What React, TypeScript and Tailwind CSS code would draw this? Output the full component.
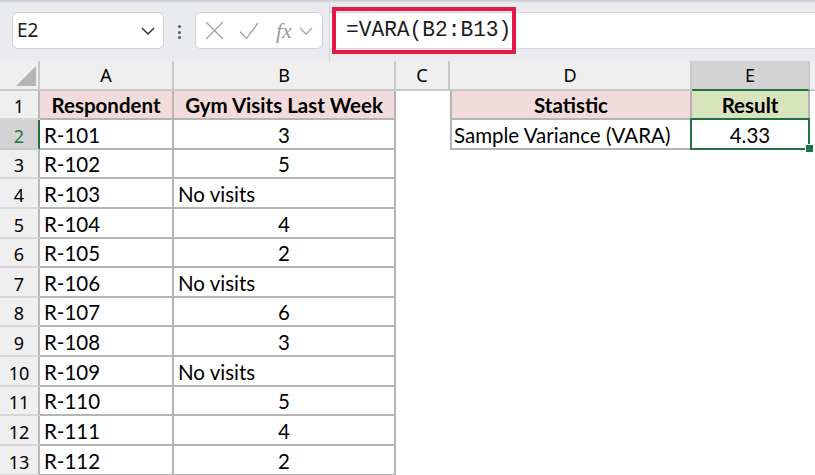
import React from "react";

const LINE = "border-[#b4b4b4]";
const CELL = "font-['Lato',sans-serif] text-[20.5px] text-black leading-none";

type Row = { n: number; h: string; a: string; b: string; d?: string; e?: string };

const ROWS: Row[] = [
  { n: 2, h: "h-[30px]", a: "R-101", b: "3", d: "Sample Variance (VARA)", e: "4.33" },
  { n: 3, h: "h-[29px]", a: "R-102", b: "5" },
  { n: 4, h: "h-[30px]", a: "R-103", b: "No visits" },
  { n: 5, h: "h-[30px]", a: "R-104", b: "4" },
  { n: 6, h: "h-[29px]", a: "R-105", b: "2" },
  { n: 7, h: "h-[30px]", a: "R-106", b: "No visits" },
  { n: 8, h: "h-[29px]", a: "R-107", b: "6" },
  { n: 9, h: "h-[30px]", a: "R-108", b: "3" },
  { n: 10, h: "h-[30px]", a: "R-109", b: "No visits" },
  { n: 11, h: "h-[29px]", a: "R-110", b: "5" },
  { n: 12, h: "h-[30px]", a: "R-111", b: "4" },
  { n: 13, h: "h-[30px]", a: "R-112", b: "2" },
];

function Toolbar() {
  return (
    <div className="relative h-[61px] bg-[#e9ebee] flex items-start">
      <div className="absolute inset-x-0 top-0 h-[3px] bg-gradient-to-b from-[#c3c5c8] to-[#e9ebee]" />
      {/* name box */}
      <div className="mt-[12px] ml-[12px] w-[152px] h-[37px] rounded-[6px] border border-[#cdd0d4] bg-white flex items-center justify-between pl-[4px] pr-[8px]">
        <span className="font-['Noto_Sans',sans-serif] text-[19px] text-[#1b1b1b]">E2</span>
        <svg width="14" height="8" viewBox="0 0 14 8" fill="none">
          <path d="M1 1l6 6 6-6" stroke="#333" strokeWidth="1.5" />
        </svg>
      </div>
      <div className="mt-[25px] w-[31px] flex flex-col items-center gap-[2.5px]">
        <span className="w-[3px] h-[3px] rounded-full bg-[#555]" />
        <span className="w-[3px] h-[3px] rounded-full bg-[#555]" />
        <span className="w-[3px] h-[3px] rounded-full bg-[#555]" />
      </div>
      {/* fx box */}
      <div className="mt-[12px] w-[128px] h-[37px] rounded-[6px] border border-[#cdd0d4] bg-white flex items-center pl-[9px]">
        <svg width="19" height="19" viewBox="0 0 19 19" fill="none">
          <path d="M1 1l17 17M18 1L1 18" stroke="#a5a5a5" strokeWidth="1.4" />
        </svg>
        <svg className="ml-[15px]" width="20" height="18" viewBox="0 0 20 18" fill="none">
          <path d="M1 9.5l6.5 7L19 1" stroke="#a5a5a5" strokeWidth="1.4" />
        </svg>
        <span className="ml-[17px] font-['Liberation_Serif',serif] italic text-[22px] text-[#9a9a9a] leading-none">
          fx
        </span>
        <svg className="ml-[7px]" width="14" height="8" viewBox="0 0 14 8" fill="none">
          <path d="M1 1l6 6 6-6" stroke="#a5a5a5" strokeWidth="1.4" />
        </svg>
      </div>
      <div className="ml-[6px] w-px self-stretch bg-[#d3d6da]" />
      {/* formula box */}
      <div className="relative mt-[12px] flex-1 h-[37px] bg-white border-y border-[#d6d8db] flex items-center pl-[16px]">
        <span className="font-['Liberation_Mono',monospace] text-[21.2px] text-[#1b1b1b] leading-none">
          =VARA(B2:B13)
        </span>
        <div className="absolute left-[2px] top-[-6px] w-[184px] h-[47px] border-[4px] border-[#e3194b]" />
      </div>
    </div>
  );
}

function ColHeader() {
  const hd = "h-[30px] shrink-0 border-r-2 border-b-2 border-[#c9c9c9] flex items-center justify-center font-['Noto_Sans',sans-serif] text-[18px] text-black";
  return (
    <div className="flex bg-[#efefef]">
      <div className={`${hd} w-[40px] relative`}>
        <svg className="absolute left-[16px] top-[5px]" width="20" height="20" viewBox="0 0 20 20">
          <path d="M0 20L20 0V20Z" fill="#b5b5b5" />
        </svg>
      </div>
      <div className={`${hd} w-[134px]`}>A</div>
      <div className={`${hd} w-[222px]`}>B</div>
      <div className={`${hd} w-[54px]`}>C</div>
      <div className={`${hd} w-[242px]`}>D</div>
      <div className={`${hd} w-[118px] bg-[#d3d3d3] text-[#217346] border-b-[#217346]`}>E</div>
      <div className="flex-1 h-[30px] border-b-2 border-[#c9c9c9]" />
    </div>
  );
}

function RowHead({ n, selected }: { n: number; selected?: boolean }) {
  return (
    <div
      className={`w-[40px] shrink-0 border-r-2 border-b-2 flex items-end justify-center pb-[3px] font-['Noto_Sans',sans-serif] text-[18px] leading-none ${
        selected
          ? "bg-[#d3d3d3] text-[#217346] border-r-[#217346] border-b-[#cbcbcb]"
          : "bg-[#efefef] text-black border-r-[#b9b9b9] border-b-[#d6d6d6]"
      }`}
    >
      {n}
    </div>
  );
}

export default function App() {
  return (
    <div className="w-[815px] h-[475px] overflow-hidden bg-white">
      <Toolbar />
      <ColHeader />

      {/* row 1: table headers */}
      <div className="flex h-[29px]">
        <RowHead n={1} />
        <div className={`${CELL} w-[134px] border-r-2 border-b-2 ${LINE} bg-[#f2dcdb] font-bold flex items-end justify-center pb-[3px]`}>
          Respondent
        </div>
        <div className={`${CELL} w-[222px] border-r-2 border-b-2 ${LINE} bg-[#f2dcdb] font-bold flex items-end justify-center pb-[3px]`}>
          Gym Visits Last Week
        </div>
        <div className="w-[54px]" />
        <div className={`${CELL} w-[242px] border-l-2 border-r-2 border-b-2 ${LINE} bg-[#f2dcdb] font-bold flex items-end justify-center pb-[3px]`}>
          Statistic
        </div>
        <div className={`${CELL} w-[118px] border-r-2 border-b-2 ${LINE} bg-[#d8e4bc] font-bold flex items-end justify-center pb-[3px]`}>
          Result
        </div>
      </div>

      {ROWS.map((r) => {
        const blank = r.b === "No visits";
        return (
          <div key={r.n} className={`flex ${r.h}`}>
            <RowHead n={r.n} selected={r.n === 2} />
            <div className={`${CELL} w-[134px] border-r-2 border-b-2 ${LINE} flex items-end pl-[4px] pb-[3px]`}>
              {r.a}
            </div>
            <div className={`${CELL} w-[222px] border-r-2 border-b-2 ${LINE} flex items-end pb-[3px] ${blank ? "pl-[4px]" : "justify-center"}`}>
              {r.b}
            </div>
            <div className="w-[54px]" />
            {r.d ? (
              <>
                <div className={`${CELL} w-[242px] border-l-2 border-r-2 border-b-2 ${LINE} flex items-end pl-[2px] pb-[3px]`}>
                  {r.d}
                </div>
                <div className={`${CELL} relative w-[118px] border-r-2 border-b-2 ${LINE} flex items-end justify-center pb-[3px]`}>
                  {r.e}
                  <div className="absolute left-[-2px] top-[-2px] right-[-2px] bottom-[-2px] border-2 border-[#217346]" />
                  <div className="absolute right-[-5px] bottom-[-4px] w-[7px] h-[7px] bg-[#217346] ring-1 ring-white" />
                </div>
              </>
            ) : null}
          </div>
        );
      })}
    </div>
  );
}
